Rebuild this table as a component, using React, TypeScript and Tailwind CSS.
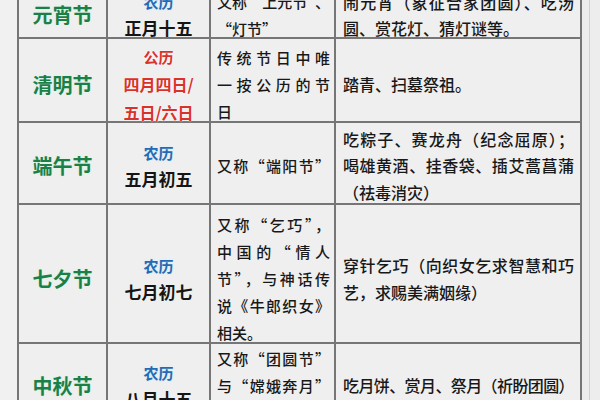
const rows = [
  {
    name: "元宵节",
    cal: "农历",
    red: false,
    date: ["正月十五"],
    desc: ["又称“上元节”、", "“灯节”"],
    custom: ["闹元宵（象征合家团圆）、吃汤", "圆、赏花灯、猜灯谜等。"],
    h: "h-[44px]",
  },
  {
    name: "清明节",
    cal: "公历",
    red: true,
    date: ["四月四日/", "五日/六日"],
    desc: ["传统节日中唯", "一按公历的节", "日"],
    custom: ["踏青、扫墓祭祖。"],
    h: "h-[82px] pt-[9px]",
  },
  {
    name: "端午节",
    cal: "农历",
    red: false,
    date: ["五月初五"],
    desc: ["又称“端阳节”"],
    custom: ["吃粽子、赛龙舟（纪念屈原）；", "喝雄黄酒、挂香袋、插艾蒿菖蒲", "（祛毒消灾）"],
    h: "h-[80px] pt-[5px]",
  },
  {
    name: "七夕节",
    cal: "农历",
    red: false,
    date: ["七月初七"],
    desc: ["又称“乞巧”，", "中国的“情人", "节”，与神话传", "说《牛郎织女》", "相关。"],
    custom: ["穿针乞巧（向织女乞求智慧和巧", "艺，求赐美满姻缘）"],
    h: "h-[137px] pt-[10px]",
  },
  {
    name: "中秋节",
    cal: "农历",
    red: false,
    date: ["八月十五"],
    desc: ["又称“团圆节”", "与“嫦娥奔月”", "相关。"],
    custom: ["吃月饼、赏月、祭月（祈盼团圆）"],
    h: "h-[83px]",
  },
];

const cell = "border-2 border-[#767676] p-0 align-middle";
const fill = "text-justify [text-align-last:justify] whitespace-nowrap";

export default function App() {
  return (
    <div className="relative w-[600px] h-[400px] overflow-hidden bg-[#ededed] font-['Noto_Sans_CJK_SC',sans-serif]">
      <div className="flex">
        <div className="w-[17px] shrink-0 h-[400px] bg-[#f1f1f1]" />
        <table className="table-fixed border-collapse mt-[-9px] bg-[#efefef]">
          <colgroup>
            <col className="w-[89px]" />
            <col className="w-[103px]" />
            <col className="w-[125px]" />
            <col className="w-[246px]" />
          </colgroup>
          <tbody>
            {rows.map((r) => (
              <tr key={r.name}>
                <td className={cell}>
                  <div className={`${r.h} flex items-center justify-center`}>
                    <span className="text-[20px] font-bold text-[#1b8048] [text-shadow:0_0_3px_#d8f5e2]">{r.name}</span>
                  </div>
                </td>
                <td className={cell}>
                  <div className={`${r.h} flex flex-col items-center justify-center leading-[26px]`}>
                    <div
                      className={
                        r.red
                          ? "text-[15px] font-bold text-[#d9322b] [text-shadow:0_0_2px_#fff]"
                          : "text-[15px] font-bold text-[#246bb3] [text-shadow:0_0_3px_#d6ecff]"
                      }
                    >
                      {r.cal}
                    </div>
                    {r.date.map((d) => (
                      <div
                        key={d}
                        className={
                          r.red
                            ? "text-[16px] leading-[28px] font-bold text-[#d9322b] [text-shadow:0_0_2px_#fff]"
                            : "text-[17px] font-bold text-[#151515]"
                        }
                      >
                        {d}
                      </div>
                    ))}
                  </div>
                </td>
                <td className={cell}>
                  <div className={`${r.h} flex flex-col justify-center pl-[6px] pr-[4px] text-[15px] font-medium leading-[27px] text-[#181818]`}>
                    {r.desc.map((t, i) => (
                      <div key={t} className={i < r.desc.length - 1 || r.desc.length === 1 ? fill : "whitespace-nowrap"}>
                        {t}
                      </div>
                    ))}
                  </div>
                </td>
                <td className={cell}>
                  <div className={`${r.h} flex flex-col justify-center pl-[7px] pr-[6px] text-[16px] font-medium leading-[26.5px] text-[#181818]`}>
                    {r.custom.map((t, i) => (
                      <div
                        key={t}
                        className={
                          i < r.custom.length - 1
                            ? fill
                            : t.length > 14
                              ? "whitespace-nowrap tracking-[-0.6px]"
                              : "whitespace-nowrap"
                        }
                      >
                        {t}
                      </div>
                    ))}
                  </div>
                </td>
              </tr>
            ))}
          </tbody>
        </table>
        <div className="flex-1 flex">
          <div className="w-[7px]" />
          <div className="w-px h-[400px] bg-[#d2d2d2]" />
        </div>
      </div>
    </div>
  );
}
